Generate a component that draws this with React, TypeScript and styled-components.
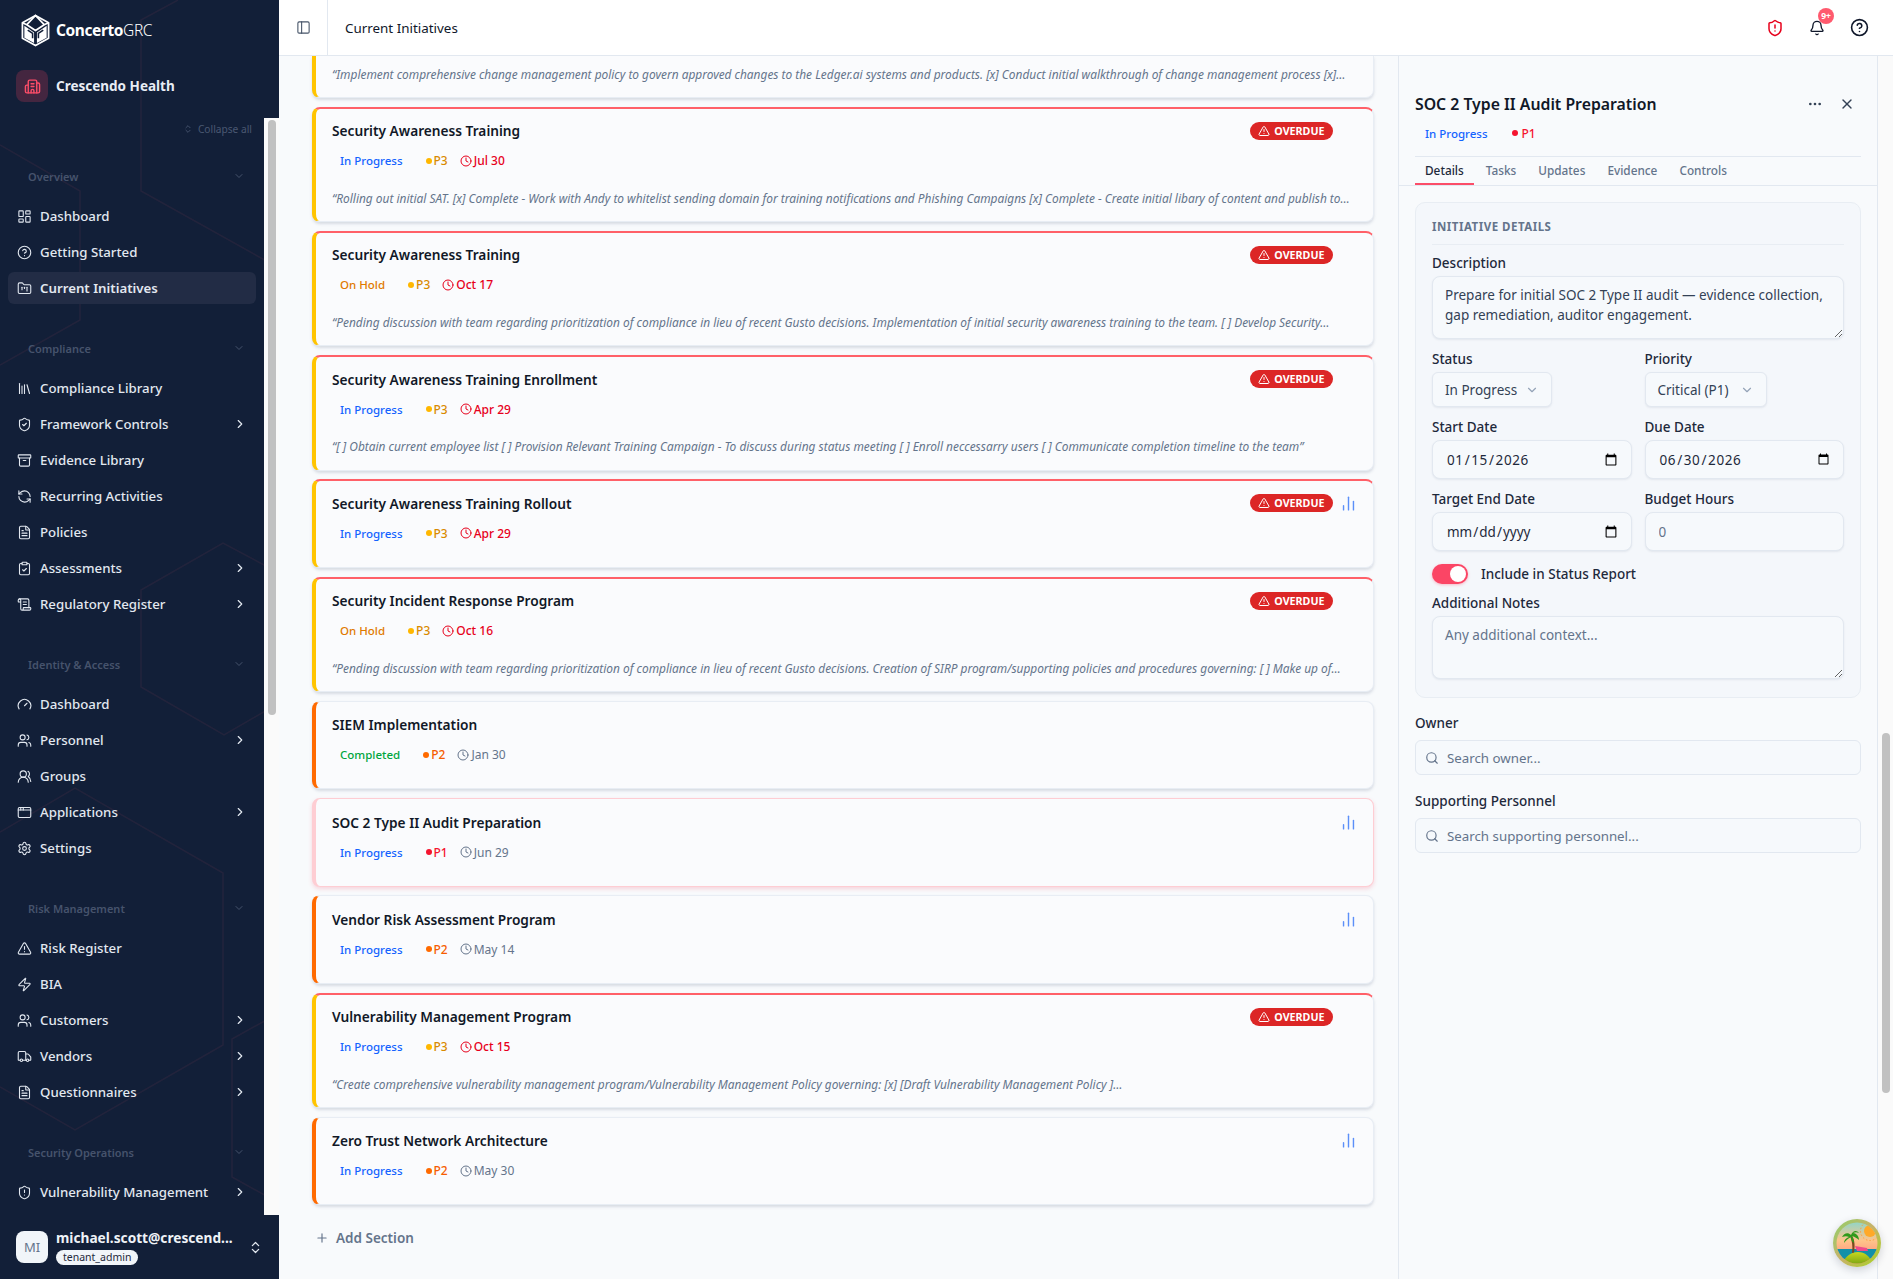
import React from 'react';
import styled, { createGlobalStyle } from 'styled-components';
import {
  AppWindow,
  Archive,
  Bell,
  Building2,
  ChartNoAxesColumn,
  ChevronDown,
  ChevronRight,
  ChevronsUpDown,
  CircleHelp,
  ClipboardCheck,
  Clock,
  Ellipsis,
  FileText,
  FolderKanban,
  Gauge,
  LayoutDashboard,
  Library,
  PanelLeft,
  Plus,
  RefreshCcw,
  ScrollText,
  Search,
  Settings,
  ShieldAlert,
  ShieldCheck,
  Truck,
  TriangleAlert,
  Users,
  UsersRound,
  X,
  Zap,
} from 'lucide-react';

const FONT = `'Noto Sans', 'Open Sans', sans-serif`;

const navSections = [
  {
    label: 'Overview',
    items: [
      { icon: LayoutDashboard, text: 'Dashboard' },
      { icon: CircleHelp, text: 'Getting Started' },
      { icon: FolderKanban, text: 'Current Initiatives', active: true },
    ],
  },
  {
    label: 'Compliance',
    items: [
      { icon: Library, text: 'Compliance Library' },
      { icon: ShieldCheck, text: 'Framework Controls', more: true },
      { icon: Archive, text: 'Evidence Library' },
      { icon: RefreshCcw, text: 'Recurring Activities' },
      { icon: FileText, text: 'Policies' },
      { icon: ClipboardCheck, text: 'Assessments', more: true },
      { icon: ScrollText, text: 'Regulatory Register', more: true },
    ],
  },
  {
    label: 'Identity & Access',
    items: [
      { icon: Gauge, text: 'Dashboard' },
      { icon: Users, text: 'Personnel', more: true },
      { icon: UsersRound, text: 'Groups' },
      { icon: AppWindow, text: 'Applications', more: true },
      { icon: Settings, text: 'Settings' },
    ],
  },
  {
    label: 'Risk Management',
    items: [
      { icon: TriangleAlert, text: 'Risk Register' },
      { icon: Zap, text: 'BIA' },
      { icon: Users, text: 'Customers', more: true },
      { icon: Truck, text: 'Vendors', more: true },
      { icon: FileText, text: 'Questionnaires', more: true },
    ],
  },
  {
    label: 'Security Operations',
    items: [{ icon: ShieldAlert, text: 'Vulnerability Management', more: true }],
  },
];

type Initiative = {
  title: string;
  status: 'In Progress' | 'On Hold' | 'Completed';
  priority: 'P1' | 'P2' | 'P3';
  date: string;
  overdue?: boolean;
  chart?: boolean;
  selected?: boolean;
  note?: string;
};

const initiatives: Initiative[] = [
  {
    title: 'Security Awareness Training',
    status: 'In Progress',
    priority: 'P3',
    date: 'Jul 30',
    overdue: true,
    note: '“Rolling out initial SAT. [x] Complete - Work with Andy to whitelist sending domain for training notifications and Phishing Campaigns [x] Complete - Create initial libary of content and publish to…',
  },
  {
    title: 'Security Awareness Training',
    status: 'On Hold',
    priority: 'P3',
    date: 'Oct 17',
    overdue: true,
    note: '“Pending discussion with team regarding prioritization of compliance in lieu of recent Gusto decisions. Implementation of initial security awareness training to the team. [ ] Develop Security…',
  },
  {
    title: 'Security Awareness Training Enrollment',
    status: 'In Progress',
    priority: 'P3',
    date: 'Apr 29',
    overdue: true,
    note: '“[ ] Obtain current employee list [ ] Provision Relevant Training Campaign - To discuss during status meeting [ ] Enroll neccessarry users [ ] Communicate completion timeline to the team”',
  },
  {
    title: 'Security Awareness Training Rollout',
    status: 'In Progress',
    priority: 'P3',
    date: 'Apr 29',
    overdue: true,
    chart: true,
  },
  {
    title: 'Security Incident Response Program',
    status: 'On Hold',
    priority: 'P3',
    date: 'Oct 16',
    overdue: true,
    note: '“Pending discussion with team regarding prioritization of compliance in lieu of recent Gusto decisions. Creation of SIRP program/supporting policies and procedures governing: [ ] Make up of…',
  },
  { title: 'SIEM Implementation', status: 'Completed', priority: 'P2', date: 'Jan 30' },
  {
    title: 'SOC 2 Type II Audit Preparation',
    status: 'In Progress',
    priority: 'P1',
    date: 'Jun 29',
    chart: true,
    selected: true,
  },
  { title: 'Vendor Risk Assessment Program', status: 'In Progress', priority: 'P2', date: 'May 14', chart: true },
  {
    title: 'Vulnerability Management Program',
    status: 'In Progress',
    priority: 'P3',
    date: 'Oct 15',
    overdue: true,
    note: '“Create comprehensive vulnerability management program/Vulnerability Management Policy governing: [x] [Draft Vulnerability Management Policy ]…',
  },
  { title: 'Zero Trust Network Architecture', status: 'In Progress', priority: 'P2', date: 'May 30', chart: true },
];

const statusColors = { 'In Progress': '#1463ff', 'On Hold': '#e07a00', Completed: '#00a63e' };
const priorityColors = { P1: '#f5142f', P2: '#f65d00', P3: '#d98a00' };
const priorityDots = { P1: '#f5142f', P2: '#ff6a00', P3: '#ffb700' };
const edgeColors = { P1: '#fecdd3', P2: '#ff6a00', P3: '#ffc400' };

const LogoMark = () => (
  <svg width="31" height="33" viewBox="0 0 32 34" fill="none" stroke="#fff" strokeWidth="1.8" strokeLinejoin="round">
    <path d="M16 1.5 29.5 9v16L16 32.5 2.500 25V9Z" />
    <path d="M16 1.500 7 11l9 6 9-6Z M2.500 9 7 11 M29.500 9 25 11" fill="none" />
    <path d="M4.500 12 14.500 19v11L4.500 24.500Z" fill="#fff" stroke="none" />
    <path d="M27.500 12 17.500 19v11l10-5.500Z" fill="#fff" stroke="none" />
    <path d="M8 16.500 13 20v5M24 16.500 19 20v5" stroke="#121f38" strokeWidth="1.600" />
  </svg>
);

const BeachBadge = () => (
  <svg width="48" height="48" viewBox="0 0 48 48">
    <defs>
      <linearGradient id="ring" x1="0" y1="0" x2="1" y2="1">
        <stop offset="0" stopColor="#8fd06a" />
        <stop offset="0.5" stopColor="#c8b26a" />
        <stop offset="1" stopColor="#a6d320" />
      </linearGradient>
      <linearGradient id="sky" x1="0" y1="0" x2="0" y2="1">
        <stop offset="0" stopColor="#7fd8d0" />
        <stop offset="0.45" stopColor="#ffc48a" />
        <stop offset="0.75" stopColor="#ff9a80" />
      </linearGradient>
      <linearGradient id="isle" x1="0" y1="0" x2="0" y2="1">
        <stop offset="0" stopColor="#c8d81e" />
        <stop offset="1" stopColor="#6a9a10" />
      </linearGradient>
      <clipPath id="inner">
        <circle cx="24" cy="24" r="20.500" />
      </clipPath>
    </defs>
    <circle cx="24" cy="24" r="24" fill="url(#ring)" />
    <g clipPath="url(#inner)">
      <rect width="48" height="48" fill="url(#sky)" />
      <circle cx="37" cy="12" r="6" fill="#ffa928" />
      <circle cx="37" cy="12" r="9.500" fill="none" stroke="#ff9a3c" strokeWidth="1" strokeDasharray="1.500 2" />
      <rect y="30" width="48" height="10" fill="#1290a8" />
      <path d="M22 27l12 2 1 3H24Z" fill="#ee4c8c" />
      <path d="M9 46c2-8 9-13 16-13s13 5 15 13v2H9Z" fill="url(#isle)" />
      <path d="M19 34c1-7 0-12-2-17l2-.500c3 5 3 11 2 17Z" fill="#7a4a20" />
      <path d="M18 16c-3-3-7-2-9 2 3-1 5-1 7 0-3 1-5 3-5 6 2-3 5-5 7-6 0 3 1 5 3 6 0-3-1-5-2-7 3 1 5 2 7 4 0-4-3-7-6-7 2-1 4-1 6 0-2-3-6-3-8 2Z" fill="#2f9a1c" />
    </g>
  </svg>
);

const App = () => (
  <Shell>
    <GlobalStyle />
    <Sidebar>
      <HexLines viewBox="0 0 279 1279" width="279" height="1279" fill="none">
        <polyline points="178,0 141,20 141,191 279,268" />
        <polyline points="0,145 80,191 80,320 0,365" />
        <polyline points="279,573 223,543 141,590 141,687 224,735 279,703" />
        <polyline points="0,832 75,788 223,873 223,1045 75,1130 0,1087" />
        <polyline points="279,1013 232,1039 232,1177 279,1203" />
      </HexLines>
      <Brand>
        <LogoMark />
        <BrandName>
          <b>Concerto</b>
          <span>GRC</span>
        </BrandName>
      </Brand>
      <Tenant>
        <TenantIcon>
          <Building2 size={17} />
        </TenantIcon>
        <TenantName>Crescendo Health</TenantName>
      </Tenant>
      <NavArea>
        <NavContent>
          <CollapseRow>
            <ChevronsUpDown size={10} />
            Collapse all
          </CollapseRow>
          {navSections.map((section) => (
            <NavSection key={section.label}>
              <SectionLabel>
                {section.label}
                <ChevronDown size={12} />
              </SectionLabel>
              <NavList>
                {section.items.map((item) => {
                  const Icon = item.icon;
                  return (
                    <NavItem key={section.label + item.text} $active={item.active}>
                      <Icon size={15} strokeWidth={1.75} />
                      <NavText>{item.text}</NavText>
                      {item.more && <ChevronRight size={14} />}
                    </NavItem>
                  );
                })}
              </NavList>
            </NavSection>
          ))}
        </NavContent>
        <ScrollTrack>
          <ScrollThumb $height={595} />
        </ScrollTrack>
      </NavArea>
      <UserBar>
        <UserAvatar>MI</UserAvatar>
        <UserInfo>
          <UserMail>michael.scott@crescend...</UserMail>
          <RoleBadge>tenant_admin</RoleBadge>
        </UserInfo>
        <ChevronsUpDown size={15} color="#e2e8f0" />
      </UserBar>
    </Sidebar>

    <Main>
      <TopBar>
        <ToggleCell>
          <PanelLeft size={15} strokeWidth={1.75} />
        </ToggleCell>
        <PageTitle>Current Initiatives</PageTitle>
        <TopIcons>
          <TopIcon>
            <ShieldAlert size={18} color="#e7001b" />
          </TopIcon>
          <TopIcon>
            <Bell size={16} />
            <CountBadge>9+</CountBadge>
          </TopIcon>
          <TopIcon>
            <CircleHelp size={19} />
          </TopIcon>
        </TopIcons>
      </TopBar>

      <Workspace>
        <Board>
          <CardList>
            <ScrolledCard>
              <CardNote>
                “Implement comprehensive change management policy to govern approved changes to the Ledger.ai systems and
                products. [x] Conduct initial walkthrough of change management process [x]…
              </CardNote>
            </ScrolledCard>
            {initiatives.map((item) => (
              <Card key={item.title + item.date} $priority={item.priority} $overdue={item.overdue} $selected={item.selected}>
                <CardTop>
                  <CardTitle>{item.title}</CardTitle>
                  {item.overdue && (
                    <OverdueBadge>
                      <TriangleAlert size={12} />
                      OVERDUE
                    </OverdueBadge>
                  )}
                  <ChartSlot>{item.chart && <ChartNoAxesColumn size={17} color="#5b8ff9" />}</ChartSlot>
                </CardTop>
                <MetaRow>
                  <StatusPill $color={statusColors[item.status]}>{item.status}</StatusPill>
                  <PriorityTag $color={priorityColors[item.priority]}>
                    <PriorityDot $color={priorityDots[item.priority]} />
                    {item.priority}
                  </PriorityTag>
                  <DueDate $late={item.overdue}>
                    <Clock size={12} />
                    {item.date}
                  </DueDate>
                </MetaRow>
                {item.note && <CardNote>{item.note}</CardNote>}
              </Card>
            ))}
          </CardList>
          <AddSection>
            <Plus size={14} />
            Add Section
          </AddSection>
        </Board>

        <DetailPanel>
          <PanelHead>
            <PanelTitleRow>
              <PanelTitle>SOC 2 Type II Audit Preparation</PanelTitle>
              <PanelActions>
                <Ellipsis size={16} />
                <X size={16} />
              </PanelActions>
            </PanelTitleRow>
            <PanelMeta>
              <StatusPill $color={statusColors['In Progress']}>In Progress</StatusPill>
              <PanelPriority>
                <PriorityDot $color="#f5142f" />
                P1
              </PanelPriority>
            </PanelMeta>
          </PanelHead>
          <Tabs>
            <Tab $active>Details</Tab>
            <Tab>Tasks</Tab>
            <Tab>Updates</Tab>
            <Tab>Evidence</Tab>
            <Tab>Controls</Tab>
          </Tabs>
          <PanelBody>
            <DetailsCard>
              <CardHeading>Initiative Details</CardHeading>
              <Field>
                <FieldLabel>Description</FieldLabel>
                <TextArea defaultValue="Prepare for initial SOC 2 Type II audit — evidence collection, gap remediation, auditor engagement." />
              </Field>
              <FieldGrid>
                <Field>
                  <FieldLabel>Status</FieldLabel>
                  <SelectTrigger $width={120}>
                    In Progress
                    <ChevronDown size={14} color="#94a3b8" />
                  </SelectTrigger>
                </Field>
                <Field>
                  <FieldLabel>Priority</FieldLabel>
                  <SelectTrigger $width={122}>
                    Critical (P1)
                    <ChevronDown size={14} color="#94a3b8" />
                  </SelectTrigger>
                </Field>
                <Field>
                  <FieldLabel>Start Date</FieldLabel>
                  <DateInput type="date" defaultValue="2026-01-15" $filled />
                </Field>
                <Field>
                  <FieldLabel>Due Date</FieldLabel>
                  <DateInput type="date" defaultValue="2026-06-30" $filled />
                </Field>
                <Field>
                  <FieldLabel>Target End Date</FieldLabel>
                  <DateInput type="date" />
                </Field>
                <Field>
                  <FieldLabel>Budget Hours</FieldLabel>
                  <NumberInput placeholder="0" />
                </Field>
              </FieldGrid>
              <ToggleRow>
                <Toggle>
                  <ToggleKnob />
                </Toggle>
                Include in Status Report
              </ToggleRow>
              <Field>
                <FieldLabel>Additional Notes</FieldLabel>
                <TextArea placeholder="Any additional context..." />
              </Field>
            </DetailsCard>
            <SearchField>
              <FieldLabel>Owner</FieldLabel>
              <SearchBox>
                <Search size={14} color="#64748b" />
                <SearchInput placeholder="Search owner..." />
              </SearchBox>
            </SearchField>
            <SearchField>
              <FieldLabel>Supporting Personnel</FieldLabel>
              <SearchBox>
                <Search size={14} color="#64748b" />
                <SearchInput placeholder="Search supporting personnel..." />
              </SearchBox>
            </SearchField>
          </PanelBody>
        </DetailPanel>

        <PageScroll>
          <ScrollThumb $height={360} />
        </PageScroll>
      </Workspace>
      <FloatingBadge>
        <BeachBadge />
      </FloatingBadge>
    </Main>
  </Shell>
);

export default App;

const GlobalStyle = createGlobalStyle`
  html, body {
    margin: 0;
    height: 100%;
    overflow: hidden;
    font-family: ${FONT};
    background: #f8fafc;
  }

  * {
    box-sizing: border-box;
  }
`;

const Shell = styled.div`
  display: flex;
  height: 100vh;
  font-size: 14px;
  color: #0f172a;
`;

const Sidebar = styled.aside`
  position: relative;
  display: flex;
  flex-direction: column;
  flex: 0 0 279px;
  background: #121f38;
  overflow: hidden;
`;

const HexLines = styled.svg`
  position: absolute;
  top: 0;
  left: 0;
  pointer-events: none;

  polyline {
    stroke: rgba(255, 96, 120, 0.07);
    stroke-width: 1.5;
  }
`;

const Brand = styled.div`
  position: relative;
  display: flex;
  align-items: center;
  gap: 5px;
  height: 60px;
  padding: 0 0 0 20px;
`;

const BrandName = styled.div`
  font-size: 15.5px;
  letter-spacing: -0.4px;
  color: #fff;

  b {
    font-weight: 700;
  }

  span {
    font-weight: 300;
  }
`;

const Tenant = styled.div`
  position: relative;
  display: flex;
  align-items: center;
  gap: 8px;
  height: 58px;
  padding: 10px 16px 16px;
`;

const TenantIcon = styled.div`
  display: flex;
  align-items: center;
  justify-content: center;
  width: 32px;
  height: 32px;
  border-radius: 8px;
  background: rgba(244, 63, 94, 0.22);
  color: #fb4d68;
`;

const TenantName = styled.div`
  margin-top: -1px;
  font-size: 13.5px;
  font-weight: 700;
  color: #e8edf5;
`;

const NavArea = styled.div`
  position: relative;
  display: flex;
  flex: 1;
  min-height: 0;
`;

const NavContent = styled.nav`
  flex: 1;
  padding: 0 8px;
  overflow: hidden;
`;

const CollapseRow = styled.div`
  display: flex;
  align-items: center;
  justify-content: flex-end;
  gap: 5px;
  height: 22px;
  padding-right: 4px;
  font-size: 10.2px;
  color: #4a5872;
`;

const NavSection = styled.section`
  margin-top: 32px;

  &:first-of-type {
    margin-top: 24px;
  }
`;

const SectionLabel = styled.div`
  display: flex;
  align-items: center;
  justify-content: space-between;
  height: 24px;
  padding: 0 11px 0 20px;
  font-size: 11px;
  font-weight: 600;
  color: #46536c;
`;

const NavList = styled.div`
  display: flex;
  flex-direction: column;
  gap: 4px;
  margin-top: 12px;
`;

const NavItem = styled.div<{ $active?: boolean }>`
  display: flex;
  align-items: center;
  gap: 8px;
  height: 32px;
  padding: 0 9px;
  border-radius: 6px;
  color: #e2e8f0;
  font-size: 13.25px;
  font-weight: ${(props) => (props.$active ? 600 : 500)};
  background: ${(props) => (props.$active ? '#222c45' : 'transparent')};

  svg {
    flex: none;
  }
`;

const NavText = styled.span`
  flex: 1;
  white-space: nowrap;
`;

const ScrollTrack = styled.div`
  flex: 0 0 15px;
  padding: 2px 3px 0 4px;
  background: #fafafa;
`;

const ScrollThumb = styled.div<{ $height: number }>`
  width: 8px;
  height: ${(props) => props.$height}px;
  border-radius: 4px;
  background: #c1c1c1;
`;

const UserBar = styled.div`
  position: relative;
  display: flex;
  align-items: center;
  gap: 8px;
  flex: 0 0 64px;
  padding: 0 16px;
  background: #121f38;
`;

const UserAvatar = styled.div`
  display: flex;
  align-items: center;
  justify-content: center;
  flex: none;
  width: 32px;
  height: 32px;
  border-radius: 8px;
  background: #f1f5f9;
  color: #64748b;
  font-size: 13px;
`;

const UserInfo = styled.div`
  flex: 1;
  min-width: 0;
`;

const UserMail = styled.div`
  font-size: 13.7px;
  font-weight: 700;
  line-height: 17px;
  color: #eef2f7;
  white-space: nowrap;
  overflow: hidden;
`;

const RoleBadge = styled.div`
  display: inline-block;
  padding: 0 7px;
  border-radius: 8px;
  background: #f1f5f9;
  color: #1e293b;
  font-size: 10.5px;
  line-height: 15px;
`;

const Main = styled.main`
  position: relative;
  display: flex;
  flex-direction: column;
  flex: 1;
  min-width: 0;
`;

const TopBar = styled.header`
  display: flex;
  align-items: center;
  flex: 0 0 56px;
  background: #fff;
  border-bottom: 1px solid #e2e8f0;
`;

const ToggleCell = styled.div`
  display: flex;
  align-items: center;
  justify-content: center;
  width: 49px;
  height: 100%;
  border-right: 1px solid #e2e8f0;
  color: #475569;
`;

const PageTitle = styled.div`
  flex: 1;
  padding-left: 17px;
  font-size: 13.4px;
`;

const TopIcons = styled.div`
  display: flex;
  gap: 22px;
  padding-right: 24px;
`;

const TopIcon = styled.div`
  position: relative;
  display: flex;
  align-items: center;
  justify-content: center;
  width: 20px;
  height: 20px;
`;

const CountBadge = styled.span`
  position: absolute;
  top: -10px;
  right: -7px;
  width: 16px;
  height: 16px;
  border-radius: 50%;
  background: #ff5a6e;
  color: #fff;
  font-size: 8.5px;
  font-weight: 700;
  line-height: 16px;
  text-align: center;
`;

const Workspace = styled.div`
  display: flex;
  flex: 1;
  min-height: 0;
`;

const Board = styled.div`
  flex: 1;
  min-width: 0;
  padding: 0 24px 0 33px;
  overflow: hidden;
`;

const CardList = styled.div`
  display: flex;
  flex-direction: column;
  gap: 8.75px;
`;

const Card = styled.article<{ $priority: 'P1' | 'P2' | 'P3'; $overdue?: boolean; $selected?: boolean }>`
  padding: ${(props) => (props.$overdue ? '12px' : '13px')} 16px 15.5px;
  border: 1px solid ${(props) => (props.$selected ? '#fecdd3' : '#e8edf4')};
  border-top: ${(props) => (props.$overdue ? '2px solid #ff6068' : '')};
  border-left: 4px solid ${(props) => edgeColors[props.$priority]};
  border-radius: 8px;
  background: #fafbfd;
  box-shadow: ${(props) =>
    props.$selected ? '0 2px 4px rgba(244, 63, 94, 0.2)' : '0 2px 3px rgba(100, 116, 139, 0.22)'};
`;

/* the card scrolled halfway under the top bar: only its note still shows */
const ScrolledCard = styled.article`
  padding: 10.25px 16px 14.5px;
  border: solid #e8edf4;
  border-width: 0 1px 1px 4px;
  border-left-color: ${edgeColors.P3};
  border-radius: 0 0 8px 8px;
  background: #fafbfd;
  box-shadow: 0 2px 3px rgba(100, 116, 139, 0.22);

  p {
    margin: 0;
  }
`;

const CardTop = styled.div`
  display: flex;
  align-items: center;
  height: 20px;
`;

const CardTitle = styled.h3`
  flex: 1;
  margin: 0;
  font-size: 13.7px;
  font-weight: 600;
  color: #111827;
`;

const OverdueBadge = styled.span`
  display: flex;
  align-items: center;
  gap: 4px;
  height: 18px;
  padding: 0 8.5px;
  border-radius: 9px;
  background: #dc2626;
  color: #fff;
  font-size: 10.7px;
  font-weight: 700;
`;

const ChartSlot = styled.div`
  display: flex;
  justify-content: flex-end;
  width: 24px;
`;

const MetaRow = styled.div`
  display: flex;
  align-items: center;
  gap: 15px;
  height: 20px;
  margin: 10px 0 8px;
`;

const StatusPill = styled.span<{ $color: string }>`
  padding: 0 8px;
  color: ${(props) => props.$color};
  font-size: 11.5px;
  font-weight: 500;
`;

const PriorityTag = styled.span<{ $color: string }>`
  display: flex;
  align-items: center;
  gap: 2px;
  color: ${(props) => props.$color};
  font-size: 12px;
  font-weight: 500;
`;

const PriorityDot = styled.i<{ $color: string }>`
  width: 6px;
  height: 6px;
  border-radius: 50%;
  background: ${(props) => props.$color};
`;

const DueDate = styled.span<{ $late?: boolean }>`
  display: flex;
  align-items: center;
  gap: 2px;
  margin-left: -3px;
  color: ${(props) => (props.$late ? '#e7001b' : '#64748b')};
  font-size: 12px;
  font-weight: ${(props) => (props.$late ? 500 : 400)};
`;

const CardNote = styled.p`
  margin: 19px 0 0;
  font-size: 11.9px;
  font-style: italic;
  line-height: 16px;
  color: #64748b;
  white-space: nowrap;
  overflow: hidden;
  text-overflow: ellipsis;
`;

const AddSection = styled.div`
  display: flex;
  align-items: center;
  gap: 7px;
  margin-top: 24px;
  padding-left: 3px;
  font-size: 13.5px;
  font-weight: 600;
  color: #64748b;
`;

const DetailPanel = styled.section`
  flex: 0 0 480px;
  min-width: 0;
  border: solid #e2e8f0;
  border-width: 0 1px;
  background: #f8fafc;
`;

const PanelHead = styled.div`
  margin: 0 16px;
  padding: 38px 0 13px;
  border-bottom: 1px solid #e2e8f0;
`;

const PanelTitleRow = styled.div`
  display: flex;
  align-items: center;
  justify-content: space-between;
  height: 20px;
`;

const PanelTitle = styled.h2`
  margin: 0;
  font-size: 15.8px;
  font-weight: 600;
  color: #111827;
`;

const PanelActions = styled.div`
  display: flex;
  align-items: center;
  gap: 16px;
  padding-right: 6px;
  color: #334155;
`;

const PanelMeta = styled.div`
  display: flex;
  align-items: center;
  gap: 15px;
  height: 20px;
  margin-top: 9px;
  padding-left: 2px;
`;

const PanelPriority = styled.span`
  display: flex;
  align-items: center;
  gap: 4px;
  margin-left: 1px;
  color: #f5142f;
  font-size: 12px;
  font-weight: 500;
`;

const Tabs = styled.div`
  display: flex;
  gap: 2px;
  padding: 0 16px;
  height: 29px;
  border-bottom: 1px solid #e2e8f0;
`;

const Tab = styled.div<{ $active?: boolean }>`
  height: 28px;
  padding: 0 10px;
  border-bottom: 2px solid ${(props) => (props.$active ? '#fb4d68' : 'transparent')};
  font-size: 11.8px;
  font-weight: 500;
  line-height: 26px;
  color: ${(props) => (props.$active ? '#1e293b' : '#64748b')};
`;

const PanelBody = styled.div`
  padding: 16px 16px 0;
`;

const DetailsCard = styled.div`
  display: flex;
  flex-direction: column;
  gap: 11px;
  padding: 17px 16px 18px;
  border: 1px solid #e8edf3;
  border-radius: 10px;
  background: #f4f7fb;
`;

const CardHeading = styled.h4`
  margin: 0 0 -2px;
  padding-bottom: 10px;
  border-bottom: 1px solid #e8edf3;
  font-size: 11.5px;
  font-weight: 700;
  line-height: 14px;
  letter-spacing: 0.5px;
  text-transform: uppercase;
  color: #64748b;
`;

const Field = styled.div`
  display: flex;
  flex-direction: column;
  align-items: flex-start;
`;

const FieldGrid = styled.div`
  display: grid;
  grid-template-columns: 1fr 1fr;
  column-gap: 13px;
  row-gap: 11px;
`;

const FieldLabel = styled.label`
  margin-bottom: 4px;
  font-size: 13.5px;
  font-weight: 500;
  line-height: 18px;
  color: #1e293b;
`;

const TextArea = styled.textarea`
  display: block;
  width: 100%;
  height: 63px;
  padding: 8px 12px;
  border: 1px solid #e2e8f0;
  border-radius: 8px;
  outline: none;
  background: #f6f9fc;
  box-shadow: 0 1px 2px rgba(100, 116, 139, 0.12);
  font-family: ${FONT};
  font-size: 13.5px;
  line-height: 20px;
  color: #334155;

  &::placeholder {
    color: #64748b;
  }
`;

const SelectTrigger = styled.div<{ $width: number }>`
  display: flex;
  align-items: center;
  justify-content: space-between;
  width: ${(props) => props.$width}px;
  height: 35px;
  padding: 0 12px;
  border: 1px solid #e2e8f0;
  border-radius: 6px;
  background: #f6f9fc;
  box-shadow: 0 1px 2px rgba(100, 116, 139, 0.12);
  font-size: 13.5px;
  color: #334155;
`;

const DateInput = styled.input<{ $filled?: boolean }>`
  width: 100%;
  height: 39px;
  padding: 0 11px 0 13px;
  border: 1px solid #e2e8f0;
  border-radius: 8px;
  outline: none;
  background: #f6f9fc;
  box-shadow: 0 1px 2px rgba(100, 116, 139, 0.12);
  font-family: ${FONT};
  font-size: 13.5px;
  letter-spacing: ${(props) => (props.$filled ? '0.6px' : '0')};
  color: #1e293b;
`;

const NumberInput = styled(DateInput)`
  &::placeholder {
    color: #64748b;
  }
`;

const ToggleRow = styled.div`
  display: flex;
  align-items: center;
  gap: 13px;
  height: 20px;
  margin: 2px 0 -1px;
  font-size: 13.5px;
  font-weight: 500;
  color: #1e293b;
`;

const Toggle = styled.div`
  display: flex;
  align-items: center;
  justify-content: flex-end;
  width: 36px;
  height: 20px;
  padding: 2px;
  border-radius: 10px;
  background: #fb4565;
  box-shadow: 0 1px 3px rgba(251, 69, 101, 0.35);
`;

const ToggleKnob = styled.div`
  width: 16px;
  height: 16px;
  border-radius: 50%;
  background: #fff;
`;

const SearchField = styled.div`
  display: flex;
  flex-direction: column;
  margin-top: 16px;

  & + & {
    margin-top: 17px;
  }

  label {
    margin-bottom: 8px;
  }
`;

const SearchBox = styled.div`
  display: flex;
  align-items: center;
  gap: 6px;
  height: 35px;
  padding: 0 9px;
  border: 1px solid #e2e8f0;
  border-radius: 6px;
  background: #f6f9fc;
`;

const SearchInput = styled.input`
  flex: 1;
  border: none;
  outline: none;
  background: transparent;
  font-family: ${FONT};
  font-size: 13.3px;

  &::placeholder {
    color: #64748b;
  }
`;

const PageScroll = styled.div`
  flex: 0 0 15px;
  padding: 677px 3px 0 4px;
  background: #fafafa;
`;

const FloatingBadge = styled.div`
  position: absolute;
  right: 12px;
  bottom: 12px;
  width: 48px;
  height: 48px;
  border-radius: 50%;
  box-shadow: 0 3px 8px rgba(15, 23, 42, 0.18);
`;
